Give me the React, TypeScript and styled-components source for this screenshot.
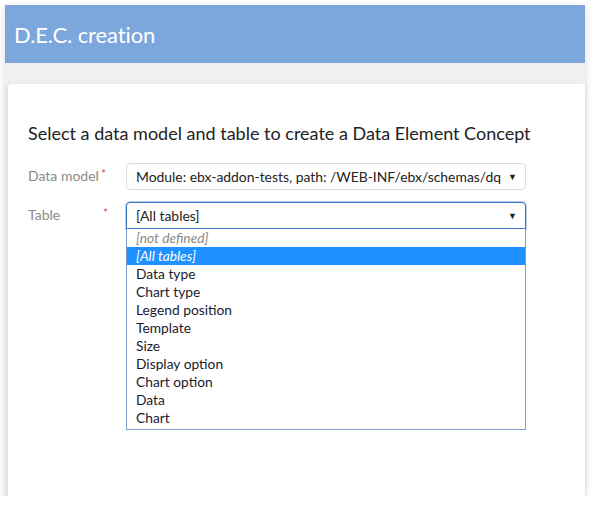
import React from "react";
import styled, { createGlobalStyle } from "styled-components";

const Global = createGlobalStyle`
  html, body { margin: 0; padding: 0; background: #ffffff; }
  body { font-family: Lato, "Open Sans", Arial, sans-serif; }
`;

const Page = styled.div`
  padding: 5px 9px 0 5px;
  width: 594px;
  box-sizing: border-box;
`;

const Frame = styled.div`
  width: 580px;
  background: #f0f0f0;
  box-shadow: 0 2px 7px rgba(0, 0, 0, 0.16);
  display: flex;
  flex-direction: column;
`;

const Header = styled.div`
  height: 58px;
  background: #7ba7dd;
  display: flex;
  align-items: center;
  padding-left: 9px;
  box-sizing: border-box;
`;

const Title = styled.h1`
  margin: 0;
  font-family: Lato, sans-serif;
  font-weight: 400;
  font-size: 22px;
  color: #ffffff;
  letter-spacing: -0.1px;
`;

const Body = styled.div`
  padding: 21px 0 0 3px;
`;

const Card = styled.div`
  background: #ffffff;
  border-radius: 4px 0 0 0;
  box-shadow: -1px 2px 5px rgba(0, 0, 0, 0.12);
  height: 412px;
  padding: 38px 20px 0 20px;
  box-sizing: border-box;
`;

const Heading = styled.h2`
  margin: 0 0 19px 0;
  font-family: Lato, sans-serif;
  font-weight: 400;
  font-size: 18px;
  color: #222;
  line-height: 22px;
`;

const Row = styled.div<{ $gap?: number }>`
  display: grid;
  grid-template-columns: 98px 400px;
  align-items: start;
  margin-bottom: ${(p) => p.$gap ?? 0}px;
`;

const Label = styled.div`
  display: flex;
  align-items: flex-start;
  font-size: 14px;
  color: #8a8a8a;
  height: 27px;
  line-height: 26px;
`;

const LabelText = styled.span<{ $w?: number }>`
  width: ${(p) => (p.$w ? `${p.$w}px` : "auto")};
  margin-right: 2px;
`;

const Star = styled.span`
  color: #e0505a;
  font-size: 12px;
  line-height: 22px;
`;

const SelectBox = styled.div<{ $focus?: boolean }>`
  height: 27px;
  box-sizing: border-box;
  border: 1px solid ${(p) => (p.$focus ? "#3d76c5" : "#dcdcdc")};
  border-radius: ${(p) => (p.$focus ? "4px 4px 0 0" : "4px")};
  box-shadow: ${(p) => (p.$focus ? "0 0 0 1px rgba(61,118,197,0.35)" : "none")};
  display: flex;
  align-items: center;
  padding: 0 8px 0 9px;
  font-size: 13.9px;
  color: #222;
  background: #fff;
`;

const SelectText = styled.span`
  flex: 1;
  white-space: nowrap;
  overflow: hidden;
`;

const Arrow = styled.span`
  font-size: 9px;
  color: #222;
  margin-left: 6px;
`;

const List = styled.div`
  border: 1px solid #7f9bcf;
  border-top: none;
  box-sizing: border-box;
  background: #fff;
  padding-bottom: 2px;
`;

const Item = styled.div<{ $selected?: boolean; $muted?: boolean }>`
  height: 18px;
  line-height: 18px;
  font-size: 13.8px;
  padding-left: 9px;
  font-style: ${(p) => (p.$muted || p.$selected ? "italic" : "normal")};
  background: ${(p) => (p.$selected ? "#1e90ff" : "transparent")};
  color: ${(p) => (p.$selected ? "#ffffff" : p.$muted ? "#8a8a8a" : "#1a1a2e")};
`;

const tables = [
  "Data type",
  "Chart type",
  "Legend position",
  "Template",
  "Size",
  "Display option",
  "Chart option",
  "Data",
  "Chart",
];

export default function App() {
  return (
    <>
      <Global />
      <Page>
        <Frame>
          <Header>
            <Title>D.E.C. creation</Title>
          </Header>
          <Body>
            <Card>
              <Heading>Select a data model and table to create a Data Element Concept</Heading>
              <Row $gap={12}>
                <Label>
                  <LabelText>Data model</LabelText>
                  <Star>*</Star>
                </Label>
                <SelectBox>
                  <SelectText>Module: ebx-addon-tests, path: /WEB-INF/ebx/schemas/dq</SelectText>
                  <Arrow>▼</Arrow>
                </SelectBox>
              </Row>
              <Row>
                <Label>
                  <LabelText $w={73}>Table</LabelText>
                  <Star>*</Star>
                </Label>
                <div>
                  <SelectBox $focus>
                    <SelectText>[All tables]</SelectText>
                    <Arrow>▼</Arrow>
                  </SelectBox>
                  <List>
                    <Item $muted>[not defined]</Item>
                    <Item $selected>[All tables]</Item>
                    {tables.map((t) => (
                      <Item key={t}>{t}</Item>
                    ))}
                  </List>
                </div>
              </Row>
            </Card>
          </Body>
        </Frame>
      </Page>
    </>
  );
}
